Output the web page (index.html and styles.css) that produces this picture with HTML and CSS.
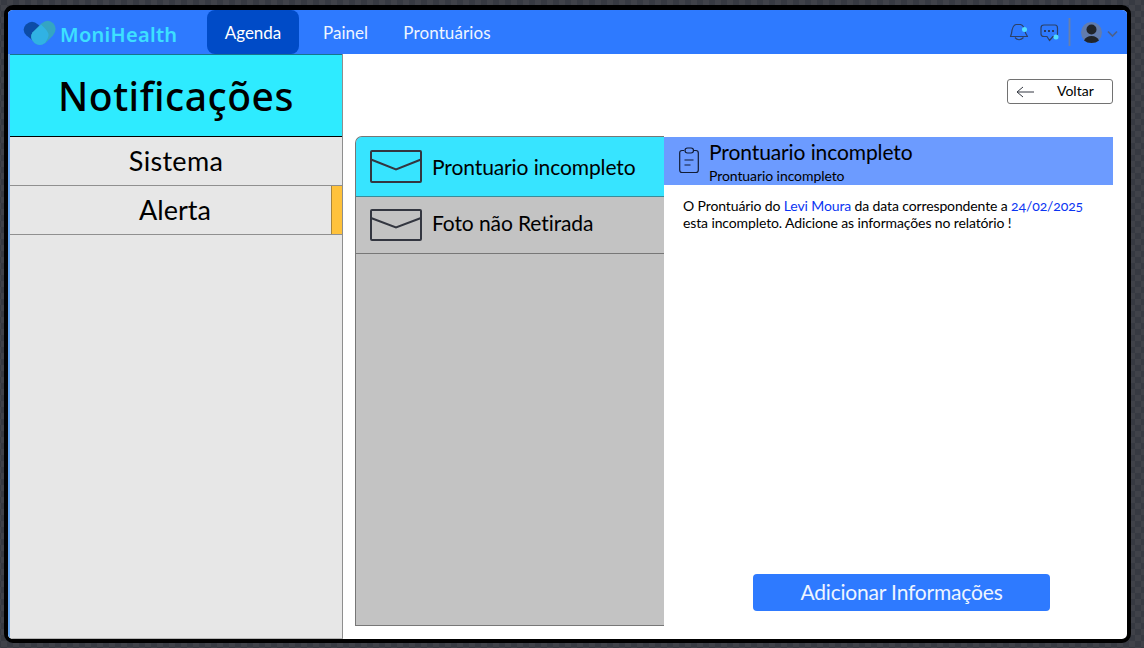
FILE: index.html
```html
<!DOCTYPE html>
<html lang="pt-BR">
<head>
<meta charset="utf-8">
<title>MoniHealth</title>
<link rel="stylesheet" href="styles.css">
</head>
<body>
<div class="window">
  <header class="topbar">
    <div class="brand">
      <svg class="brand-mark" width="34" height="27" viewBox="0 0 34 27">
        <path d="M3 4.500Q9-1 15 4.500L23 12L15 24.500L3.500 15.500Q-2 10 3 4.500Z" fill="#0c4ca7"/>
        <path d="M18.500 3.500Q25-2 30.500 3.500Q35 9 30 15.500L23 22.500Q17 27 11.500 23Q6 18 9.500 12.500Z" fill="#34a5c3"/>
        <path d="M18 4.500Q25 11 25.500 14Q26 17 22 23Q17 27 11.500 23Q6 18 9.500 12.500Z" fill="#30b2e4"/>
      </svg>
      <span class="brand-name">MoniHealth</span>
    </div>
    <nav class="nav">
      <a class="nav-item active"><span>Agenda</span></a>
      <a class="nav-item painel"><span>Painel</span></a>
      <a class="nav-item pront"><span>Prontuários</span></a>
    </nav>
    <div class="tools">
      <svg width="112" height="32" viewBox="0 0 112 32" fill="none">
        <g stroke="#2c4067" stroke-width="1.200" stroke-linejoin="round">
          <path d="M5.500 15.500Q6.500 7 10 6.500H14.500Q18 7 19.500 15L21.500 18.500H4.500L5.500 15.500Z"/>
          <path d="M9 19.500Q13 24 17.500 19.500"/>
          <path d="M38 7H49Q51.500 7 51.500 10V16Q51.500 18.500 49 18.500H47L43.500 22.500L41 18.500H38Q35 18.500 35 16V10Q35 7 38 7Z"/>
        </g>
        <g fill="#263a63"><rect x="38" y="12" width="2" height="2"/><rect x="42" y="12" width="2" height="2"/><rect x="46" y="12" width="2" height="2"/></g>
        <circle cx="18.500" cy="11.500" r="2.500" fill="#52dcff"/>
        <circle cx="50" cy="19" r="2.500" fill="#52dcff"/>
        <path d="M63.500 0V28" stroke="#6b80a9" stroke-width="1.800"/>
        <circle cx="85.500" cy="14.500" r="10.500" fill="#627cad"/>
        <circle cx="85.500" cy="11.500" r="5" fill="#20242a"/>
        <path d="M78 22.500Q80 18 85.500 18T93 22.500Q90 25 85.500 25T78 22.500Z" fill="#20242a"/>
        <path d="M102 13.500L106.500 18L111 13.500" stroke="#4d618b" stroke-width="1.700"/>
      </svg>
    </div>
  </header>
  <div class="body">
    <aside class="sidebar">
      <h1 class="side-title"><span>Notificações</span></h1>
      <a class="side-item sistema">Sistema</a>
      <a class="side-item alert"><span class="side-label">Alerta</span><i class="flag"></i></a>
    </aside>
    <main class="main">
      <div class="actions">
        <button class="back">
          <svg width="18" height="12" viewBox="0 0 18 12" fill="none" stroke="#333740" stroke-width="1"><path d="M18 6H1M7 1L1 6L7 11"/></svg>
          <span>Voltar</span>
        </button>
      </div>
      <div class="panels">
        <section class="list">
          <div class="mail selected">
            <svg width="52" height="33" viewBox="0 0 52 33" fill="none" stroke="#333640" stroke-width="2"><rect x="1" y="1" width="50" height="31" rx="1"/><path d="M1 9.500L26 19.500L51 9.500"/></svg>
            <span>Prontuario incompleto</span>
          </div>
          <div class="mail second">
            <svg width="52" height="32" viewBox="0 0 52 32" fill="none" stroke="#333640" stroke-width="2"><rect x="1" y="1" width="50" height="30" rx="1"/><path d="M1 9L26 18.500L51 9"/></svg>
            <span>Foto não Retirada</span>
          </div>
        </section>
        <section class="detail">
          <div class="detail-head">
            <svg width="20" height="27" viewBox="0 0 20 27" fill="none" stroke="#111c36" stroke-width="1.200"><path d="M5 3.500H3Q.7 3.500 .7 6V23Q.7 25.500 3 25.500H17Q19.300 25.500 19.300 23V6Q19.300 3.500 17 3.500H15"/><path d="M6 3.500Q6 1 8.500 1H12Q14.500 1 14.500 3.500T12 6H8.500Q6 6 6 3.500ZM5.500 13H14.500M5.500 18H11.500"/></svg>
            <div class="heading">
              <h2>Prontuario incompleto</h2>
              <p>Prontuario incompleto</p>
            </div>
          </div>
          <div class="message">
            <p>O Prontuário do <a>Levi Moura</a> da data correspondente a <a class="date">24/02/2025</a></p>
            <p>esta incompleto. Adicione as informações no relatório !</p>
          </div>
          <button class="add"><span>Adicionar Informações</span></button>
        </section>
      </div>
    </main>
  </div>
</div>
</body>
</html>
```
FILE: styles.css
```css
* { box-sizing: border-box; margin: 0; padding: 0; }
body {
  width: 1144px; height: 648px; overflow: hidden; padding: 5px 12px 4px 4px;
  background: repeating-conic-gradient(#373a42 0 25%, #404249 0 50%) 1px 5px / 12px 12px;
  font-family: Lato, "Noto Sans", sans-serif; color: #000;
}
span, p, h2 { white-space: nowrap; }
.window {
  width: 1127px; height: 638px; border: 4px solid #000; border-top-width: 5px;
  border-radius: 9px; overflow: hidden; background: #fff;
  display: flex; flex-direction: column;
}
.topbar { height: 44px; flex: none; background: #2e7aff; display: flex; align-items: center; }
.brand { width: 199px; padding-left: 15px; display: flex; align-items: center; gap: 3px; }
.brand-mark { margin-top: 3px; }
.brand-name { font: 600 20px "Noto Sans", sans-serif; letter-spacing: .3px; color: #3de0ff; margin-top: 4px; }
.nav { display: flex; height: 44px; color: #eef5ff; font-size: 17px; }
.nav-item { display: flex; align-items: center; justify-content: center; }
.active { width: 92px; border-radius: 8px; background: #004bc7; color: #fff; }
.painel { width: 93px; }
.pront { width: 110px; letter-spacing: .1px; }
.tools { margin-left: auto; padding-right: 9px; height: 28px; }
.body { flex: 1; min-height: 0; display: flex; }
.sidebar {
  width: 335px; background: #e7e7e7; border-right: 1px solid #8e8e8e;
  border-left: 2px solid #65a5ef; border-bottom: 1px solid #b5b5b5; flex: none;
}
.side-title {
  height: 83px; background: #2eebff; border-top: 1px solid #17758c; border-bottom: 1px solid #000;
  display: flex; align-items: center; justify-content: center;
  font: 500 39px "Noto Sans", sans-serif; letter-spacing: .5px;
}
.side-item {
  height: 49px; border-bottom: 1px solid #909090; font-size: 27px;
  display: flex; align-items: center; justify-content: center;
}
.sistema { height: 49px; padding-bottom: 2px; letter-spacing: .3px; }
.side-label { flex: 1; text-align: center; padding: 0 0 2px 9px; }
.flag { width: 11px; height: 48px; background: #ffc23b; border-left: 1px solid #a7853c; }
.main { flex: 1; padding: 25px 14px 13px 12px; display: flex; flex-direction: column; min-width: 0; }
.actions { display: flex; justify-content: flex-end; height: 57px; }
.back {
  width: 106px; height: 25px; border: 1px solid #727272; border-radius: 3px; background: #fff;
  display: flex; align-items: center; padding-left: 8px; gap: 23px; color: #000;
  font: 14px Lato, sans-serif;
}
.back span { padding-bottom: 2px; }
.panels { flex: 1; display: flex; min-height: 0; }
.list { width: 309px; background: #c3c3c3; border: 1px solid #777; border-right: 0; border-radius: 7px 0 0 0; overflow: hidden; }
.mail { height: 57px; border-bottom: 1px solid #777; display: flex; align-items: center; padding-left: 14px; gap: 10px; font-size: 21px; letter-spacing: -.1px; }
.mail span { padding-bottom: 1px; }
.mail.second span { padding-bottom: 6px; }
.mail.selected { height: 60px; background: #37e4ff; border-color: #3a8c99; }
.detail { flex: 1; display: flex; flex-direction: column; }
.detail-head { height: 48px; margin-top: 1px; background: #6c9bff; display: flex; padding: 0 0 0 15px; gap: 10px; }
.detail-head svg { margin-top: 10px; }
h2 { font-size: 21px; font-weight: 400; line-height: 30px; letter-spacing: -.1px; }
.heading p { font-size: 14px; line-height: 18px; letter-spacing: -.08px; }
.message { padding: 12px 0 0 19px; font-size: 14px; line-height: 17px; letter-spacing: -.12px; }
.message a { color: #0b35f2; }
.date { font-variant-numeric: oldstyle-nums; }
.add {
  width: 297px; height: 37px; margin: auto 0 15px 89px; border: 0; border-radius: 4px;
  background: #2e7aff; color: #eef5ff; font: 21px Lato, sans-serif; letter-spacing: -.18px; padding-bottom: 2px;
}
```
